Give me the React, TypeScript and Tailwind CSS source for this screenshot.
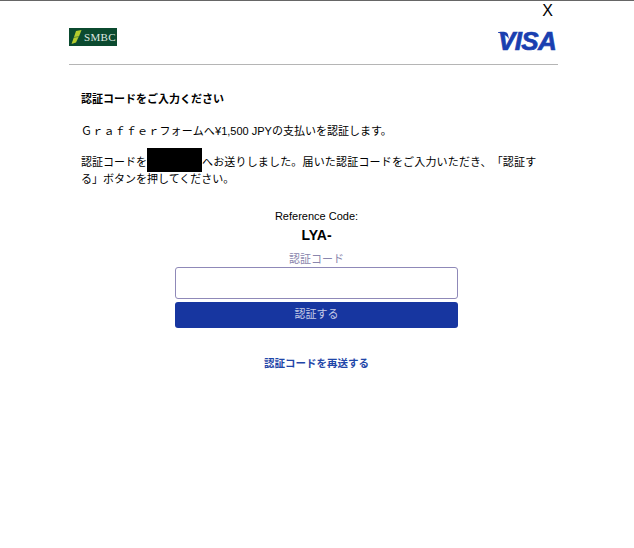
import React from 'react';

const jp = { fontFamily: '"Liberation Sans", "Noto Sans CJK JP", sans-serif' };

const SmbcLogo = () => (
  <div className="flex h-[18px] w-[48px] items-center gap-[2px] bg-[#0b4a2f] pl-[2px]">
    <svg width="11" height="14" viewBox="0 0 11 14" className="shrink-0">
      <path d="M5 1 L10.5 0 L8 6.5 L3 7 Z" fill="#b5cc2e" />
      <path d="M2.8 7.6 L7.6 7 L5 12.5 L0.5 14 Z" fill="#b5cc2e" />
    </svg>
    <span className="text-[11px] leading-none tracking-[0.3px] text-[#dfe8e2]" style={{ fontFamily: '"Liberation Serif", serif' }}>
      SMBC
    </span>
  </div>
);

const VisaLogo = () => (
  <div className="relative h-[20px] w-[59px]">
    <span
      className="block text-[26px] leading-[20px] font-bold tracking-[-0.6px] text-[#1a3fb0] italic [-webkit-text-stroke:0.7px_#1a3fb0]"
      style={{ fontFamily: '"Liberation Sans", sans-serif' }}
    >
      VISA
    </span>
    <svg width="13" height="8" viewBox="0 0 13 8" className="absolute top-[1px] left-0">
      <path d="M0 0 L7 0 Q9.5 0 10 2.5 L11 7 Q8 2 0 0.8 Z" fill="#1a3fb0" />
    </svg>
  </div>
);

export default function App() {
  return (
    <div className="h-[548px] w-[634px] overflow-hidden border-t border-[#666] bg-white text-black" style={jp}>
      <div className="flex h-[18px] justify-end pt-[1px] pr-[81px] text-[16px] leading-[17px]">X</div>
      <div className="ml-[69px] w-[489px]">
        <div className="flex h-[46px] items-start justify-between border-b border-[#b5b5b5] pt-[9px]">
          <SmbcLogo />
          <div className="pt-[3px] pr-[1px]">
            <VisaLogo />
          </div>
        </div>

        <div className="px-[12px] pt-[27px] text-[11px] leading-[14px] [text-spacing-trim:space-all]">
          <p className="font-bold">認証コードをご入力ください</p>
          <p className="mt-[18px]">
            <span className="tracking-[0.2px]">Ｇｒａｆｆｅｒフォームへ</span>¥1,500 JPYの支払いを認証します。
          </p>
          <p className="mt-[10px] leading-[15px]">
            認証コードを
            <span className="inline-block h-[24px] w-[55px] bg-black align-[-6px]" />
            <span className="tracking-[0.17px]">へお送りしました。届いた認証コードをご入力いただき、「認証す</span>
            <br />
            る」ボタンを押してください。
          </p>
        </div>

        <div className="mt-[22px] flex flex-col items-center pl-[6px]">
          <p className="text-[11px] leading-[14px]">Reference Code:</p>
          <p className="mt-[4px] text-[14px] leading-[17px] font-bold">LYA-</p>
          <p className="mt-[8px] text-[11px] leading-[14px] text-[#8a86ad]">認証コード</p>
          <div className="mt-[1px] h-[32px] w-[283px] rounded-[3px] border border-[#8f89b8] bg-white" />
          <button className="mt-[3px] h-[26px] w-[283px] rounded-[3px] bg-[#1736a0] pb-[2px] text-[11px] text-[#c5cbe6]">認証する</button>
          <a className="mt-[28px] text-[10.5px] leading-[14px] font-bold text-[#1f46a8]">認証コードを再送する</a>
        </div>
      </div>
    </div>
  );
}
